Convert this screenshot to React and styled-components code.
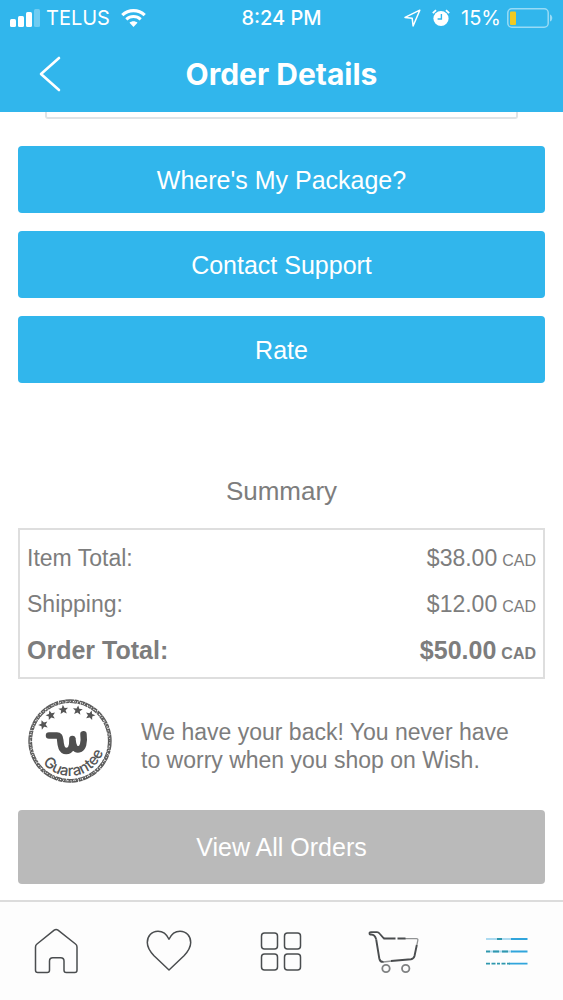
import React from "react";
import styled, { createGlobalStyle } from "styled-components";

const GlobalStyle = createGlobalStyle`
  * {
    box-sizing: border-box;
  }
  body {
    margin: 0;
    background: #ffffff;
    font-family: "Liberation Sans", Arial, sans-serif;
    color: #7d7d7d;
  }
`;

const StyledScreen = styled.div`
  min-height: 100vh;
  display: flex;
  flex-direction: column;
`;

const StyledHeader = styled.header`
  background: #31b6ec;
  color: #ffffff;
`;

const StyledStatusBar = styled.div`
  height: 36px;
  padding: 0 10px;
  display: grid;
  grid-template-columns: 1fr auto 1fr;
  align-items: center;
  font-family: Inter, sans-serif;
  font-size: 20px;
`;

const StyledStatusGroup = styled.div`
  display: flex;
  align-items: center;
  justify-content: ${props => (props.$end ? "flex-end" : "flex-start")};
  gap: 11px;
`;

const StyledReading = styled.span`
  display: flex;
  align-items: center;
  gap: 6px;
`;

const StyledTime = styled.span`
  font-weight: 500;
`;

const StyledTitleBar = styled.div`
  height: 76px;
  display: grid;
  grid-template-columns: 100px 1fr 100px;
  align-items: center;
`;

const StyledBack = styled.button`
  height: 76px;
  padding: 0;
  border: 0;
  background: none;
  color: inherit;
  cursor: pointer;
  display: flex;
  align-items: center;
  justify-content: center;
`;

const StyledTitle = styled.h1`
  margin: 0;
  text-align: center;
  font-family: Inter, sans-serif;
  font-size: 30px;
  line-height: 36px;
  font-weight: 700;
`;

const StyledMain = styled.main`
  flex: 1;
  padding: 0 18px 16px;
`;

const StyledCardEdge = styled.div`
  height: 7px;
  margin: 0 27px;
  border: 2px solid #dfe3e6;
  border-top: 0;
  border-radius: 0 0 3px 3px;
`;

const StyledActions = styled.div`
  margin-top: 27px;
  display: flex;
  flex-direction: column;
  gap: 18px;
`;

const StyledButton = styled.button`
  width: 100%;
  height: ${props => (props.$muted ? "74px" : "67px")};
  padding: 0;
  border: 0;
  border-radius: 4px;
  background: ${props => (props.$muted ? "#bababa" : "#31b6ec")};
  color: #ffffff;
  font-family: inherit;
  font-size: 25px;
  line-height: 28px;
  cursor: pointer;
`;

const StyledHeading = styled.h2`
  margin: 92px 0 21px;
  text-align: center;
  font-size: 26px;
  line-height: 32px;
  font-weight: 400;
`;

const StyledSummary = styled.div`
  padding: 5px 7px 4px;
  border: 2px solid #dedede;
`;

const StyledTable = styled.table`
  width: 100%;
  border-collapse: collapse;
`;

const StyledRow = styled.tr`
  height: 46px;
  font-size: ${props => (props.$total ? "25px" : "23px")};
  font-weight: ${props => (props.$total ? 700 : 400)};
`;

const StyledLabel = styled.th`
  padding: 0;
  text-align: left;
  font-weight: inherit;
`;

const StyledAmount = styled.td`
  padding: 0;
  text-align: right;
`;

const StyledCurrency = styled.span`
  margin-left: 5px;
  font-size: 16px;
`;

const StyledGuarantee = styled.section`
  margin: 20px 0 27px;
  padding-left: 10px;
  display: flex;
  align-items: center;
  gap: 29px;
`;

const StyledPromise = styled.p`
  margin: 0;
  max-width: 380px;
  padding-top: 10px;
  font-size: 23px;
  line-height: 28px;
`;

const StyledSvg = styled.svg`
  display: block;
  flex: none;
  overflow: visible;
`;

const StyledTabs = styled.nav`
  height: 100px;
  border-top: 2px solid #dcdcdc;
  background: #fdfdfd;
  display: grid;
  grid-template-columns: repeat(5, 1fr);
`;

const StyledTab = styled.a`
  display: flex;
  align-items: center;
  justify-content: center;
  color: ${props => (props.$active ? "#31a5dc" : "#4a4d4f")};
`;

const SignalIcon = () => (
  <StyledSvg width="30" height="18" viewBox="0 0 30 18" fill="#fff">
    <rect x="0" y="10" width="6" height="8" rx="1.5" />
    <rect x="8" y="7" width="6" height="11" rx="1.5" />
    <rect x="16" y="3" width="6" height="15" rx="1.5" />
    <rect x="24" y="0" width="6" height="18" rx="1.5" opacity="0.3" />
  </StyledSvg>
);

const WifiIcon = () => (
  <StyledSvg width="25" height="18" viewBox="0 0 25 18" fill="none" stroke="#fff">
    <path d="M1.3 6.2C7.6.1 17.4.1 23.7 6.2" strokeWidth="3.2" />
    <path d="M5.3 10.4c4.1-3.8 10.3-3.8 14.4 0" strokeWidth="3" />
    <path d="M12.5 18l-4-4.2c2.2-2 5.8-2 8 0z" fill="#fff" stroke="none" />
  </StyledSvg>
);

const LocationIcon = () => (
  <StyledSvg width="17" height="18" viewBox="0 0 17 18" fill="none">
    <path
      d="M15.8 1.2L1 8.4l7.2.9.9 7.7z"
      stroke="#fff"
      strokeWidth="1.5"
      strokeLinejoin="round"
    />
  </StyledSvg>
);

const AlarmIcon = () => (
  <StyledSvg width="18" height="18" viewBox="0 0 18 18" fill="none">
    <circle cx="9" cy="9.5" r="7.6" fill="#fff" />
    <path d="M.8 4.2L4 1.2M17.2 4.2L14 1.2" stroke="#fff" strokeWidth="1.8" />
    <path d="M9.4 5v5H5.6" stroke="#31b6ec" strokeWidth="1.4" />
  </StyledSvg>
);

const BatteryIcon = () => (
  <StyledSvg width="46" height="20" viewBox="0 0 46 20" fill="none">
    <rect
      x=".8"
      y=".8"
      width="40.4"
      height="18.4"
      rx="4"
      stroke="#fff"
      strokeOpacity="0.5"
      strokeWidth="1.5"
    />
    <rect x="3" y="3.5" width="6" height="13.5" rx="1" fill="#f0ca22" />
    <path d="M43 6.5c3 1 3 6 0 7z" fill="#fff" opacity="0.5" />
  </StyledSvg>
);

const BackIcon = () => (
  <StyledSvg width="22" height="36" viewBox="0 0 22 36" fill="none">
    <path
      d="M20 2L2 18l18 16"
      stroke="#fff"
      strokeWidth="2.6"
      strokeLinecap="round"
      strokeLinejoin="round"
    />
  </StyledSvg>
);

const stars = [
  [15.3, 25.7],
  [22.7, 16.3],
  [35.3, 10.7],
  [49.7, 11.3],
  [62.3, 16.3]
];

const GuaranteeBadge = () => (
  <StyledSvg width="84" height="84" viewBox="0 0 84 84" fill="none">
    <g stroke="#5c5c5c">
      <circle cx="42" cy="42" r="41" strokeWidth="1.4" strokeDasharray="9 .6 4 .9 6 .4" />
      <circle cx="42" cy="42" r="38.5" strokeWidth="1.2" strokeDasharray="7 .8 3 .5" />
      <circle cx="42" cy="42" r="39.7" strokeWidth="2" strokeDasharray="1.6 .8 2.3 1.1 .9 .7" />
    </g>
    {stars.map(([x, y]) => (
      <path
        key={x}
        transform={`translate(${x} ${y}) rotate(${(x - 42) * 0.8})`}
        d="M0-4.9l1.400 3.200 3.500.2-2.700 2.200.9 3.400L0 2.200l-3.100 1.900.9-3.400-2.700-2.200 3.500-.2z"
        fill="#555"
      />
    ))}
    <path
      d="M21 36.500h8c2.300 0 3 1.500 3.200 4.500C32.700 47 33.500 52 38.200 52s6.500-4.500 6.200-12C45 47.500 47 51 51 50.300s5.500-7 4.500-15"
      stroke="#4f4f4f"
      strokeWidth="6.5"
      strokeLinecap="round"
      strokeLinejoin="round"
    />
    <path id="badge-arc" d="M14.8 64A35 35 0 0 0 77 42" />
    <text fill="#555" fontFamily="Inter, sans-serif" fontSize="15" fontWeight="500">
      <textPath href="#badge-arc">Guarantee</textPath>
    </text>
  </StyledSvg>
);

const TabIcon = ({ children }) => (
  <StyledSvg
    width="50"
    height="50"
    viewBox="0 0 50 50"
    fill="none"
    stroke="currentColor"
    strokeWidth="1.5"
    strokeLinejoin="round"
  >
    {children}
  </StyledSvg>
);

const HomeIcon = () => (
  <TabIcon>
    <path d="M23.2 4.2q1.9-1.5 3.8 0L44.5 18q1.5 1.2 1.5 3v23.2q0 2.3-2.3 2.3h-8.4q-2.3 0-2.3-2.3V35q0-3.3-3.3-3.3h-7.9q-3.3 0-3.3 3.3v9.2q0 2.3-2.3 2.3H6.8q-2.3 0-2.3-2.3V21q0-1.8 1.5-3z" />
  </TabIcon>
);

const HeartIcon = () => (
  <TabIcon>
    <path d="M25 13.2C22.5 8 18.5 5.3 14 5.3 7.5 5.3 3.3 10.3 3.3 16.5c0 5.5 2.7 9 6.7 13.3L25 44l15-14.2c4-4.3 6.7-7.8 6.7-13.3C46.7 10.3 42.5 5.3 36 5.3c-4.5 0-8.5 2.7-11 7.9z" />
  </TabIcon>
);

const GridIcon = () => (
  <TabIcon>
    <rect x="5.5" y="7" width="16" height="16" rx="3" />
    <rect x="28.5" y="7" width="16" height="16" rx="3" />
    <rect x="5.5" y="28" width="16" height="16" rx="3" />
    <rect x="28.5" y="28" width="16" height="16" rx="3" />
  </TabIcon>
);

const CartIcon = () => (
  <TabIcon>
    <path
      d="M15 12.6L10.5 7.5Q9.5 6.2 8 6.2H2Q.3 6.2.5 7.5T2.2 8.5Q6 8.600 7.200 13.500"
      strokeWidth="1.8"
    />
    <path d="M7.2 13.5L10.3 32.500Q11 36.200 14.500 35.900" strokeWidth="1.9" />
    <path d="M14.5 12.6h12m2 0h8" strokeWidth="2" />
    <path d="M36 12.6h11.5q1.7 0 1.3 1.7l-1 5" strokeWidth="1.3" opacity="0.6" />
    <path d="M47.8 19L45.5 30q-.7 2.7-3.5 3.2L22 35" strokeWidth="1.9" />
    <path d="M14 35.900l9-1" opacity="0.6" />
    <circle cx="17" cy="42.5" r="3.7" strokeWidth="1.8" opacity="0.7" />
    <circle cx="36.7" cy="42.5" r="3.7" strokeWidth="1.8" opacity="0.7" />
  </TabIcon>
);

const MenuIcon = () => (
  <TabIcon>
    <path d="M29 13h16.5M29 25.5h16.5M27 37.7h18.5" strokeWidth="1.8" />
    <path d="M4 13h11m4 0h11M8 25.5h22" strokeWidth="1.8" opacity="0.4" />
    <path
      d="M15 13h5M4 25.5h4m3 0h6m3 0h6M4 37.7h4m1.5 0h4m1.5 0h3m1.5 0h4m1.5 0h3"
      stroke="#2f98ae"
      strokeWidth="1.8"
    />
  </TabIcon>
);

const actions = ["Where's My Package?", "Contact Support", "Rate"];

const lines = [
  { label: "Item Total:", amount: "$38.00" },
  { label: "Shipping:", amount: "$12.00" },
  { label: "Order Total:", amount: "$50.00", total: true }
];

const tabs = [
  { name: "Home", Icon: HomeIcon },
  { name: "Wishlist", Icon: HeartIcon },
  { name: "Categories", Icon: GridIcon },
  { name: "Cart", Icon: CartIcon },
  { name: "Menu", Icon: MenuIcon, active: true }
];

const Header = () => (
  <StyledHeader>
    <StyledStatusBar>
      <StyledStatusGroup>
        <StyledReading>
          <SignalIcon />
          TELUS
        </StyledReading>
        <WifiIcon />
      </StyledStatusGroup>
      <StyledTime>8:24 PM</StyledTime>
      <StyledStatusGroup $end>
        <LocationIcon />
        <AlarmIcon />
        <StyledReading>
          15%
          <BatteryIcon />
        </StyledReading>
      </StyledStatusGroup>
    </StyledStatusBar>
    <StyledTitleBar>
      <StyledBack type="button" aria-label="Back">
        <BackIcon />
      </StyledBack>
      <StyledTitle>Order Details</StyledTitle>
    </StyledTitleBar>
  </StyledHeader>
);

const Summary = () => (
  <StyledSummary>
    <StyledTable>
      <tbody>
        {lines.map(line => (
          <StyledRow key={line.label} $total={line.total}>
            <StyledLabel scope="row">{line.label}</StyledLabel>
            <StyledAmount>
              {line.amount}
              <StyledCurrency>CAD</StyledCurrency>
            </StyledAmount>
          </StyledRow>
        ))}
      </tbody>
    </StyledTable>
  </StyledSummary>
);

const App = () => (
  <StyledScreen>
    <GlobalStyle />
    <Header />
    <StyledMain>
      <StyledCardEdge />
      <StyledActions>
        {actions.map(label => (
          <StyledButton key={label} type="button">
            {label}
          </StyledButton>
        ))}
      </StyledActions>
      <StyledHeading>Summary</StyledHeading>
      <Summary />
      <StyledGuarantee>
        <GuaranteeBadge />
        <StyledPromise>
          We have your back! You never have to worry when you shop on Wish.
        </StyledPromise>
      </StyledGuarantee>
      <StyledButton type="button" $muted>
        View All Orders
      </StyledButton>
    </StyledMain>
    <StyledTabs>
      {tabs.map(({ name, Icon, active }) => (
        <StyledTab key={name} href="#" aria-label={name} $active={active}>
          <Icon />
        </StyledTab>
      ))}
    </StyledTabs>
  </StyledScreen>
);

export default App;
